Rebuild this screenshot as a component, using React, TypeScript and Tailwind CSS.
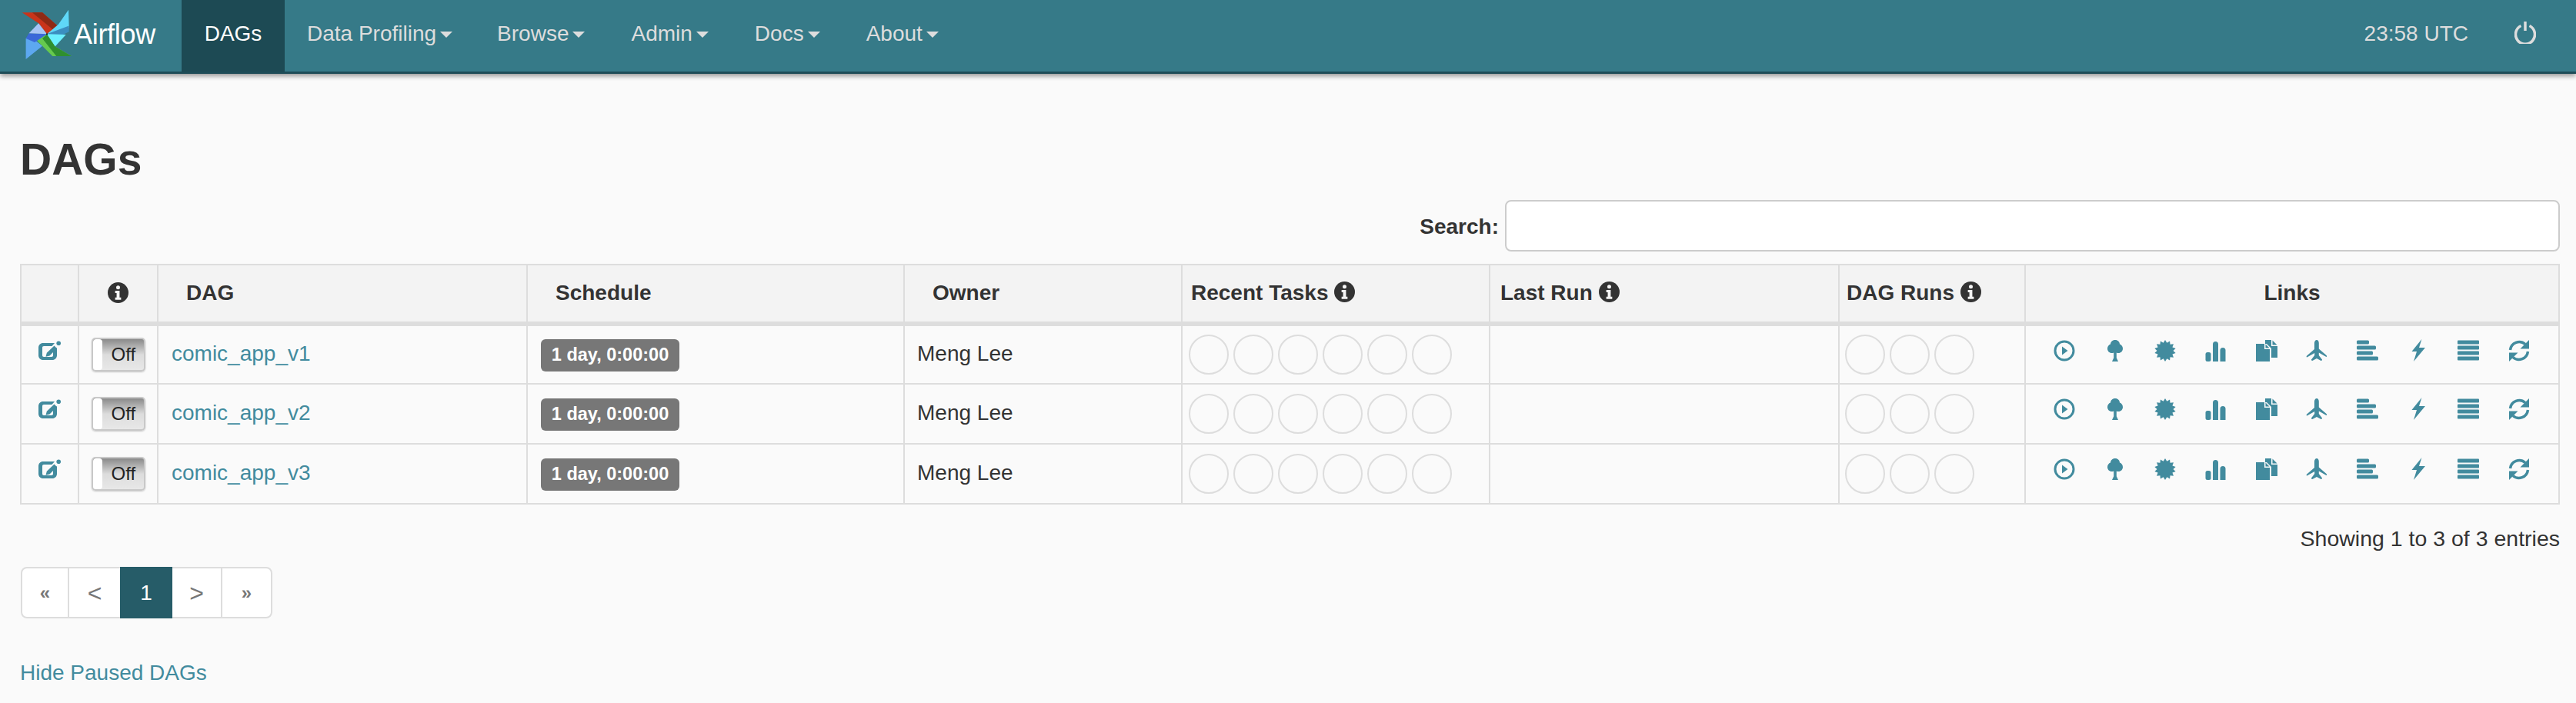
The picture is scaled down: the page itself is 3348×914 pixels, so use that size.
import React from "react";

const teal = "#428b9e";

function Info({ className = "" }: { className?: string }) {
  return (
    <svg viewBox="0 0 28 28" className={"inline-block w-[27px] h-[27px] " + className}>
      <circle cx="14" cy="14" r="14" fill="#333" />
      <circle cx="14" cy="7" r="2.6" fill="#f5f5f5" />
      <path d="M10 11.500h6v9h2v3h-8v-3h2v-6h-2z" fill="#f5f5f5" />
    </svg>
  );
}

function Edit() {
  return (
    <svg viewBox="0 0 29 26" className="w-[29px] h-[26px] block" fill={teal}>
      <path d="M6 3h15l-3.500 4H7C5.800 7 5 7.800 5 9v10c0 1.200.8 2 2 2h10c1.200 0 2-.8 2-2v-5l5-5v10c0 3.400-2.600 6-6 6H6c-3.400 0-6-2.600-6-6V9c0-3.400 2.600-6 6-6z" />
      <path d="M20.500 6.500l3.500 3.500-9.500 9.500-5 1.300 1.300-5z" />
      <circle cx="26.200" cy="3.200" r="2.800" />
    </svg>
  );
}

const I = ({ children, w = 30 }: { children: React.ReactNode; w?: number }) => (
  <svg viewBox="0 0 30 30" width={w} height={30} className="block" fill={teal}>
    {children}
  </svg>
);

const burst = (() => {
  const pts: string[] = [];
  for (let i = 0; i < 28; i++) {
    const r = i % 2 === 0 ? 14 : 10.5;
    const a = (i * Math.PI) / 14;
    pts.push(`${(15 + r * Math.sin(a)).toFixed(2)},${(15 - r * Math.cos(a)).toFixed(2)}`);
  }
  return pts.join(" ");
})();

const icons: React.ReactNode[] = [
  <I key="play">
    <circle cx="15" cy="15" r="12" fill="none" stroke={teal} strokeWidth="3" />
    <path d="M12 9.500l7.500 5.500-7.500 5.500z" />
  </I>,
  <I key="tree">
    <path d="M15 1c3.600 0 6 2.600 6 5.600 2.400.8 4 3 4 5.600 0 3.400-2.600 5.800-5.600 5.800-1 0-1.800-.2-2.600-.6v6.800l2.200 4.800h-8l2.200-4.800v-6.800c-.8.4-1.600.6-2.600.6-3 0-5.600-2.400-5.600-5.800 0-2.600 1.600-4.800 4-5.600C9 3.600 11.400 1 15 1z" />
  </I>,
  <I key="burst">
    <polygon points={burst} />
  </I>,
  <I key="bars">
    <rect x="1.500" y="17" width="7" height="12" rx="2.500" />
    <path d="M11 6.500a3.500 3.500 0 017 0V29h-7z" />
    <path d="M20.500 14.500a3.500 3.500 0 017 0V29h-7z" />
  </I>,
  <I key="files">
    <path d="M1 6h11v7h7v16H1z" />
    <path d="M13.500 6.500l5 5h-5z" />
    <path d="M13 1h8v8h8v15h-8V12l-6-6h-2z" />
    <path d="M22.500 1.500l6 6h-6z" />
  </I>,
  <I key="plane">
    <path d="M15 1c1.800 0 2.800 2 2.800 4v7.500l9.800 8.500c.8.8.8 2-.2 2l-9.600-5.500v3.500l4.200 5.500c.2.600-.4 1.500-1.400 1.500l-5.600-3-5.600 3c-1 0-1.600-.9-1.400-1.500l4.200-5.500V18L2.400 23.500c-1 0-1-1.200-.2-2l9.800-8.500V5c0-2 1.200-4 3-4z" />
  </I>,
  <I key="gantt">
    <rect x="1" y="1.500" width="16" height="5" rx="1.500" />
    <rect x="1" y="8.500" width="25" height="5" rx="1.500" />
    <rect x="1" y="15.500" width="21" height="5" rx="1.500" />
    <rect x="1" y="22.500" width="28" height="5" rx="1.500" />
  </I>,
  <I key="flash">
    <path d="M19.500 0l-13 16h6.500L9 29l15-18h-8z" />
  </I>,
  <I key="list">
    <rect x="1" y="1.500" width="28" height="5" rx="1" />
    <rect x="1" y="8.500" width="28" height="5" rx="1" />
    <rect x="1" y="15.500" width="28" height="5" rx="1" />
    <rect x="1" y="22.500" width="28" height="5" rx="1" />
  </I>,
  <I key="refresh">
    <path d="M3.500 14A11.800 11.800 0 0 1 23 6.500" fill="none" stroke={teal} strokeWidth="3.500" />
    <path d="M28 1v11.500H16.500z" />
    <path d="M26.500 16A11.800 11.800 0 0 1 7 23.500" fill="none" stroke={teal} strokeWidth="3.500" />
    <path d="M2 29V17.500h11.500z" />
  </I>,
];

function Logo() {
  return (
    <svg viewBox="83 35 200 200" width="66" height="66" className="block shrink-0">
      <polygon points="85,48 165,48 228,103 215,122 183,133 150,90" fill="#c9341a" />
      <polygon points="125,48 165,48 228,103 215,122" fill="#8f2a14" />
      <polygon points="268,37 270,108 183,133 228,95" fill="#5fd8f8" />
      <polygon points="270,100 270,124 235,140 183,133" fill="#3b8fc0" />
      <polygon points="183,133 258,135 215,182" fill="#6cf0ff" />
      <polygon points="140,155 183,135 215,182 280,220 205,220" fill="#66c94f" />
      <polygon points="165,150 183,135 215,182 280,220 220,220" fill="#2f8f2f" />
      <polygon points="100,232 100,150 183,133 140,160 165,180" fill="#5da8f0" />
      <polygon points="100,150 112,130 183,133 135,165" fill="#3a68d8" />
      <polygon points="112,130 150,90 183,133" fill="#a7c4f5" />
      <circle cx="183" cy="133" r="3" fill="#111" />
    </svg>
  );
}

function Caret() {
  return <span className="inline-block ml-[5px] mt-[2px] w-0 h-0 border-x-[8px] border-x-transparent border-t-[8px] border-t-[#dddddd]" />;
}

function NavItem({ label, className }: { label: string; className: string }) {
  return (
    <a className={"text-[#dddddd] flex items-center pb-[5px] " + className}>
      {label}
      <Caret />
    </a>
  );
}

function Circles({ n }: { n: number }) {
  return (
    <div className="flex gap-[6px]">
      {Array.from({ length: n }).map((_, i) => (
        <div key={i} className="w-[52px] h-[52px] rounded-full border-2 border-[#dddddd]" />
      ))}
    </div>
  );
}

function Row({ name }: { name: string }) {
  return (
    <tr className="h-[78px]">
      <td className="border-2 border-[#dddddd] p-0 align-top">
        <div className="flex justify-center pt-[19px]">
          <Edit />
        </div>
      </td>
      <td className="border-2 border-[#dddddd] p-0">
        <div className="flex justify-center">
          <div className="relative w-[70px] h-[44px] rounded-[5px] border-2 border-[#c8c8c8] bg-gradient-to-b from-[#8a8a8a] via-[#dcdcdc] to-[#e8e8e8] shadow-[0_1px_2px_rgba(0,0,0,0.2)]">
            <div className="absolute left-0 top-0 bottom-0 w-[12px] bg-white rounded-[4px]" />
            <div className="absolute left-[24px] top-0 bottom-0 flex items-center text-[24px] text-[#222]">Off</div>
          </div>
        </div>
      </td>
      <td className="border-2 border-[#dddddd] pl-[17px] pb-[2px]">
        <a className="text-[#428b9e]">{name}</a>
      </td>
      <td className="border-2 border-[#dddddd] pl-[17px]">
        <span className="inline-flex items-center justify-center w-[180px] h-[42px] rounded-[6px] bg-[#777777] text-white font-bold text-[23.5px]">
          1 day, 0:00:00
        </span>
      </td>
      <td className="border-2 border-[#dddddd] pl-[16px] pb-[2px] text-[#333]">Meng Lee</td>
      <td className="border-2 border-[#dddddd] pl-[8px]">
        <Circles n={6} />
      </td>
      <td className="border-2 border-[#dddddd]" />
      <td className="border-2 border-[#dddddd] pl-[7px]">
        <Circles n={3} />
      </td>
      <td className="border-2 border-[#dddddd] p-0 align-top">
        <div className="flex justify-between pt-[17px] pl-[35px] pr-[36px]">{icons}</div>
      </td>
    </tr>
  );
}

const thClass = "border-2 border-[#dddddd] border-b-[6px] font-bold text-left text-[#333] align-middle p-0 pb-[2px]";

export default function App() {
  return (
    <div className="min-h-[914px] bg-[#fafafa] text-[28px] text-[#333] font-['Liberation_Sans',Arial,sans-serif]">
      <nav className="h-[96px] bg-[#367a88] border-b-[3px] border-b-[#1e4c57] shadow-[0_3px_6px_rgba(0,0,0,0.4)] flex items-stretch pr-[52px]">
        <div className="flex items-center pl-[28px] w-[236px] pb-[4px]">
          <Logo />
          <span className="text-white text-[36px] ml-[2px] tracking-[-0.3px]">Airflow</span>
        </div>
        <a className="w-[134px] bg-[#1d4a54] text-white flex items-center justify-center pb-[5px]">DAGs</a>
        <NavItem label="Data Profiling" className="ml-[29px]" />
        <NavItem label="Browse" className="ml-[58px]" />
        <NavItem label="Admin" className="ml-[60px]" />
        <NavItem label="Docs" className="ml-[60px]" />
        <NavItem label="About" className="ml-[60px]" />
        <div className="ml-auto flex items-center gap-[60px] text-[#dddddd] pb-[5px]">
          <span>23:58 UTC</span>
          <svg viewBox="0 0 28 30" width="28" height="30" fill="none" stroke="#dddddd" strokeWidth="3.5" className="mb-[4px]">
            <path d="M8.500 6.500a12.500 12.500 0 1 0 11 0" />
            <path d="M14 1v12" />
          </svg>
        </div>
      </nav>

      <div className="pl-[26px] pr-[21px]">
        <h1 className="text-[57px] font-bold leading-[62px] mt-[80px] text-[#333]">DAGs</h1>

        <div className="flex justify-end items-center mt-[22px] h-[67px]">
          <label className="font-bold mr-[8px] pt-[2px]">Search:</label>
          <input className="w-[1371px] h-[67px] bg-white border-2 border-[#cccccc] rounded-[8px]" />
        </div>

        <table className="w-full table-fixed border-collapse mt-[16px] bg-[#fafafa]">
          <colgroup>
            <col className="w-[75px]" />
            <col className="w-[103px]" />
            <col className="w-[480px]" />
            <col className="w-[490px]" />
            <col className="w-[361px]" />
            <col className="w-[400px]" />
            <col className="w-[454px]" />
            <col className="w-[242px]" />
            <col />
          </colgroup>
          <thead className="bg-[#f3f3f3]">
            <tr className="h-[77px]">
              <th className={thClass} />
              <th className={thClass + " !text-center"}>
                <Info className="mb-[4px]" />
              </th>
              <th className={thClass + " pl-[36px]"}>DAG</th>
              <th className={thClass + " pl-[36px]"}>Schedule</th>
              <th className={thClass + " pl-[36px]"}>Owner</th>
              <th className={thClass + " pl-[11px]"}>
                <span className="inline-flex items-center gap-[8px]">Recent Tasks <Info className="mb-[2px]" /></span>
              </th>
              <th className={thClass + " pl-[13px]"}>
                <span className="inline-flex items-center gap-[8px]">Last Run <Info className="mb-[2px]" /></span>
              </th>
              <th className={thClass + " pl-[9px]"}>
                <span className="inline-flex items-center gap-[8px]">DAG Runs <Info className="mb-[2px]" /></span>
              </th>
              <th className={thClass + " !text-center"}>Links</th>
            </tr>
          </thead>
          <tbody>
            <Row name="comic_app_v1" />
            <Row name="comic_app_v2" />
            <Row name="comic_app_v3" />
          </tbody>
        </table>

        <div className="text-right mt-[27px] leading-[34px] text-[28.5px]">Showing 1 to 3 of 3 entries</div>

        <div className="mt-[20px] ml-[1px] flex w-[327px] h-[67px] bg-white border-2 border-[#dddddd] rounded-[8px] text-[#777777]">
          <div className="w-[61px] flex items-center justify-center border-r-2 border-r-[#dddddd] text-[24px] font-bold">«</div>
          <div className="w-[66px] flex items-center justify-center text-[32px]">&lt;</div>
          <div className="w-[68px] -my-[2px] flex items-center justify-center bg-[#265c68] text-white">1</div>
          <div className="w-[65px] flex items-center justify-center border-r-2 border-r-[#dddddd] text-[32px]">&gt;</div>
          <div className="flex-1 flex items-center justify-center text-[24px] font-bold">»</div>
        </div>

        <div className="mt-[50px]">
          <a className="text-[#428b9e]">Hide Paused DAGs</a>
        </div>
      </div>
    </div>
  );
}
